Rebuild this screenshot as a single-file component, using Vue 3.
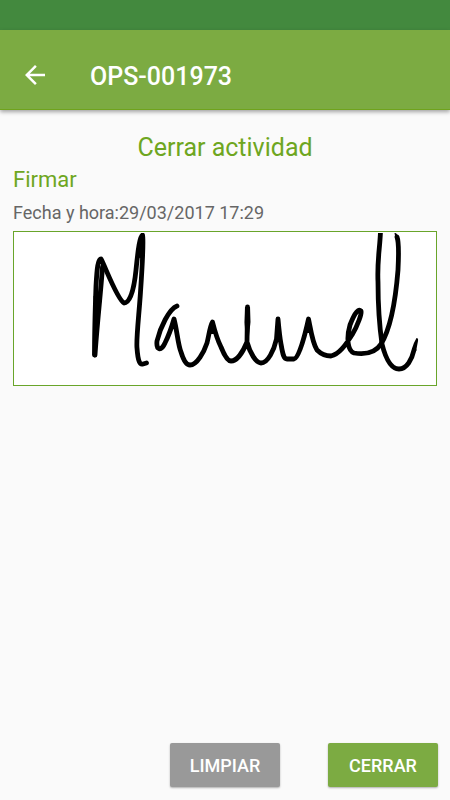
<script setup>
import { ref } from 'vue'

const code = 'OPS-001973'
const signedAt = '29/03/2017 17:29'

const signature = [
  'M94.500 355 C94.500 335 95.500 300 96 286 C97 268 98 259 101 259 C105 266 117 299 124 303 C130 303 134 290 136 270 C138 250 140 235 142.500 235 C144 240 142 270 140.500 292 C139 315 136 340 137 348 C138 362 140 365 143 364 L146.500 363',
  'M102.500 267 C100.500 295 97 325 95 355',
  'M142 238 L141 256',
  'M177 306 C169 309 160 328 157 341 C156 350 161 352 165 343 C169 335 172 326 174 319 C177 330 178 345 181 352 C184 362 187 365 190 365 C197 365 204 352 207 343 C209 335 210 326 212.500 322 C215 332 218 341 221 347 C225 357 228 361 231 361 C237 361 243 352 247 342 L247.500 307 L247 342 C250 353 256 363 261 363 C268 363 274 350 276.500 339 L278 319 C279 330 280 339 281 344 C283 356 284 359 287 359 L294 359 C299 358 305 335 308.500 319 C310 325 312 342 317 350 C321 354 326 356 331 356 C340 354 346 344 352 335 C358 325 362 313 361 311 C357 307 352 320 350 325 C346 339 348 351 354 353 C367 355 376 352 381 344 C391 328 396 295 398 270 C399 250 399 242 397 237',
  'M380.500 231 C380 248 377 260 378 282 C378 305 380 330 382 344 C386 360 392 369 399 369 C407 369 412 359 414 350'
]

const wedges = [
  'M93.500 296 L102 294 L96 352 Z',
  'M245 307 L250 307 L250.500 322 L249 336 L245.500 336 L244.500 322 Z',
  'M278 318 L275 342 L281 342 Z',
  'M212.500 322 L210 334 L215 334 Z',
  'M308.500 319 L305 333 L312 333 Z',
  'M394.500 233 Q397 232 400 241 L396.500 243 Z',
  'M411.800 349 Q414 342 416.500 338 Q418.500 338 418 341 Q417 346 416.200 351 Z'
]

const strokes = ref(signature)
const tips = ref(wedges)
const closed = ref(false)

function clearSignature() {
  strokes.value = []
  tips.value = []
}

function closeActivity() {
  closed.value = true
}
</script>

<template>
  <div class="screen">
    <div class="status-bar"></div>
    <header class="app-bar">
      <button class="back" type="button" aria-label="Volver">
        <svg viewBox="0 0 24 24" width="30" height="30" aria-hidden="true">
          <path d="M20 11H7.830l5.590-5.590L12 4l-8 8 8 8 1.410-1.410L7.830 13H20v-2z" fill="#fff" />
        </svg>
      </button>
      <h1 class="code">{{ code }}</h1>
    </header>

    <main class="content">
      <h2 class="title">Cerrar actividad</h2>
      <h3 class="section">Firmar</h3>
      <p class="date">Fecha y hora:{{ signedAt }}</p>
      <div class="pad">
        <svg class="ink" viewBox="14 232 422 153" role="img" aria-label="Firma">
          <defs>
            <clipPath id="pad-area">
              <rect x="14" y="233" width="422" height="152" />
            </clipPath>
          </defs>
          <g clip-path="url(#pad-area)">
            <path v-for="(d, i) in strokes" :key="i" class="stroke" :d="d" />
            <path v-for="(d, i) in tips" :key="'tip' + i" class="tip" :d="d" />
          </g>
        </svg>
      </div>
    </main>

    <footer class="actions">
      <button class="action clear" type="button" @click="clearSignature">LIMPIAR</button>
      <button class="action close" type="button" :disabled="closed" @click="closeActivity">CERRAR</button>
    </footer>
  </div>
</template>

<style>
body {
  margin: 0;
  background: #fafafa;
}
</style>

<style scoped>
.screen {
  display: flex;
  flex-direction: column;
  min-height: 100vh;
  background: #fafafa;
  font-family: Roboto, "Liberation Sans", sans-serif;
}

.status-bar {
  height: 30px;
  background: #43893e;
}

.app-bar {
  display: flex;
  align-items: center;
  gap: 40px;
  box-sizing: border-box;
  height: 80px;
  padding: 10px 20px 0;
  background: #7cab42;
  border-bottom: 1px solid #6fa31c;
  box-shadow: 0 2px 4px rgba(0, 0, 0, 0.35);
}

.back {
  display: flex;
  padding: 0;
  border: 0;
  background: none;
}

.code {
  margin: 0;
  padding-top: 4px;
  color: #fff;
  font-size: 25px;
  font-weight: 500;
  line-height: 30px;
}

.content {
  flex: 1;
  padding: 21px 13px 0;
}

.title,
.section {
  margin: 0;
  color: #6ea621;
  font-weight: 400;
}

.title {
  font-size: 25px;
  line-height: 34px;
  text-align: center;
}

.section {
  font-size: 22px;
  line-height: 30px;
}

.date {
  margin: 0;
  padding: 3px 0 4px;
  color: #666;
  font-size: 18px;
  line-height: 29px;
}

.pad {
  background: #fff;
  border: 1px solid #69a52a;
}

.ink {
  display: block;
  width: 100%;
}

.stroke {
  fill: none;
  stroke: #000;
  stroke-width: 4.800;
  stroke-linecap: round;
  stroke-linejoin: round;
}

.tip {
  fill: #000;
}

.actions {
  display: flex;
  justify-content: flex-end;
  gap: 48px;
  padding: 12px 12px 13px;
}

.action {
  width: 110px;
  height: 44px;
  padding: 0;
  border: 0;
  border-radius: 2px;
  color: #fff;
  font-family: inherit;
  font-size: 18px;
  font-weight: 500;
  box-shadow: 0 1px 2px rgba(0, 0, 0, 0.3);
}

.clear {
  background: #999;
}

.close {
  background: #7cab42;
}
</style>
